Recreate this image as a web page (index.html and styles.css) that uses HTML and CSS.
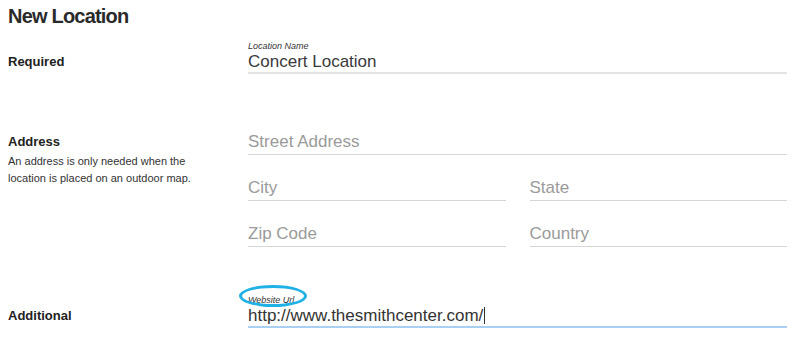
FILE: index.html
```html
<!DOCTYPE html>
<html lang="en">
<head>
<meta charset="utf-8">
<title>New Location</title>
<link rel="stylesheet" href="styles.css">
</head>
<body>
<div class="page">
  <h1 class="title">New Location</h1>

  <section class="row row-required">
    <div class="row-label">
      <h2 class="section-name">Required</h2>
    </div>
    <div class="fields">
      <div class="field">
        <label class="field-label">Location Name</label>
        <div class="input input-filled input-soft">Concert Location</div>
      </div>
    </div>
  </section>

  <section class="row row-address">
    <div class="row-label row-label-top">
      <h2 class="section-name">Address</h2>
      <p class="section-desc">An address is only needed when the location is placed on an outdoor map.</p>
    </div>
    <div class="fields fields-stack">
      <div class="input input-empty">Street Address</div>
      <div class="pair">
        <div class="input input-empty">City</div>
        <div class="input input-empty">State</div>
      </div>
      <div class="pair">
        <div class="input input-empty">Zip Code</div>
        <div class="input input-empty">Country</div>
      </div>
    </div>
  </section>

  <section class="row row-additional">
    <div class="row-label">
      <h2 class="section-name">Additional</h2>
    </div>
    <div class="fields">
      <div class="field">
        <label class="field-label field-label-marked">Website Url<span class="mark"></span></label>
        <div class="input input-filled input-focused">http://www.thesmithcenter.com/<span class="caret"></span></div>
      </div>
    </div>
  </section>
</div>
</body>
</html>
```

FILE: styles.css
```css
* {
  box-sizing: border-box;
}

html, body {
  margin: 0;
  padding: 0;
  background: #ffffff;
}

body {
  font-family: "Liberation Sans", Arial, Helvetica, sans-serif;
  color: #333333;
}

.page {
  width: 800px;
  padding: 6px 13px 0 8px;
}

.title {
  margin: 0;
  font-size: 20px;
  line-height: 20px;
  font-weight: bold;
  letter-spacing: -0.8px;
  color: #2a2a2a;
}

.row {
  display: grid;
  grid-template-columns: 240px 1fr;
}

.row-required {
  margin-top: 15px;
}

.row-address {
  margin-top: 58px;
}

.row-additional {
  margin-top: 48px;
}

.row-label {
  padding-top: 13px;
}

.row-label-top {
  padding-top: 2px;
}

.section-name {
  margin: 0;
  font-size: 13px;
  line-height: 16px;
  font-weight: bold;
  color: #222222;
}

.section-desc {
  margin: 3px 0 0;
  font-size: 11px;
  line-height: 17px;
  color: #333333;
  width: 200px;
}

.fields-stack {
  display: flex;
  flex-direction: column;
  gap: 23px;
}

.pair {
  display: grid;
  grid-template-columns: 1fr 1fr;
  column-gap: 24px;
}

.field-label {
  display: block;
  font-size: 9px;
  line-height: 11px;
  font-style: italic;
  color: #333333;
}

.field-label-marked {
  position: relative;
  width: max-content;
}

.mark {
  position: absolute;
  left: -9px;
  top: -10px;
  width: 68px;
  height: 22px;
  border: 3px solid #1fb0e6;
  border-radius: 50%;
}

.input {
  font-size: 17px;
  line-height: 20px;
  white-space: nowrap;
}

.input-empty {
  color: #9a9a9a;
  padding-bottom: 2px;
  border-bottom: 1px solid #d6d6d6;
}

.input-filled {
  color: #3a3a3a;
  border-bottom: 2px solid #e4e4e4;
}

.input-focused {
  color: #333333;
  border-bottom-color: #a9cff3;
}

.caret {
  display: inline-block;
  width: 1px;
  height: 17px;
  margin-left: 1px;
  background: #333333;
  vertical-align: -3px;
}
```
